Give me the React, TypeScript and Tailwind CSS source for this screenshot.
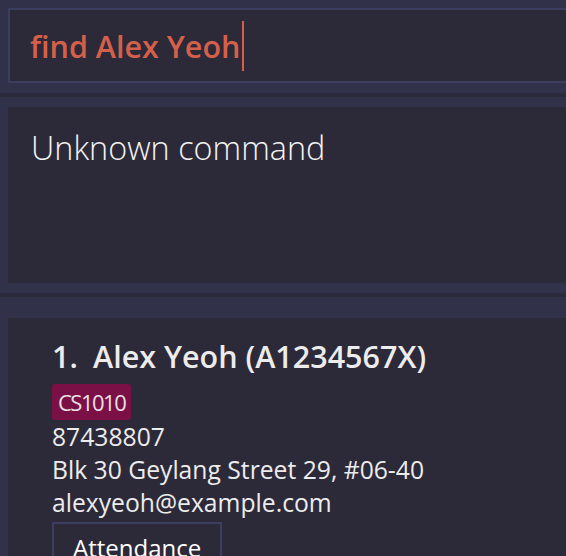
import React from 'react';

const person = {
    index: 1,
    name: 'Alex Yeoh',
    matric: 'A1234567X',
    tags: ['CS1010'],
    phone: '87438807',
    address: 'Blk 30 Geylang Street 29, #06-40',
    email: 'alexyeoh@example.com',
};

const font = { fontFamily: '"Open Sans", "Noto Sans", sans-serif' };

const App: React.FC = () => {
    return (
        <div className='w-[566px] h-[556px] overflow-hidden bg-[#31324a] flex flex-col' style={font}>
            {/* command box */}
            <div className='mt-[8px] ml-[8px] h-[75px] shrink-0 border-2 border-r-0 border-[#3c3e5f] bg-[#2c2939] flex items-center pl-[20px]'>
                <span className='text-[30.5px] leading-[40px] font-semibold text-[#d5604a]'>find Alex Yeoh</span>
                <span className='ml-[2px] w-[2px] h-[50px] bg-[#d5604a]' />
            </div>

            <div className='mt-[10px] h-[4px] shrink-0 bg-[#2a2a3a]' />

            {/* result display */}
            <div className='mt-[10px] ml-[8px] h-[176px] shrink-0 bg-[#2c2939] pt-[20px] pl-[23px]'>
                <p className='text-[32.4px] leading-[40px] font-light text-[#f3f3f3]'>Unknown command</p>
            </div>

            <div className='mt-[10px] h-[4px] shrink-0 bg-[#2a2a3a]' />

            {/* person list */}
            <div className='mt-[21px] ml-[8px] flex-1 bg-[#2c2939] pt-[20px] pl-[44px] text-[#ececec]'>
                <div className='flex text-[30.5px] leading-[36px] font-semibold'>
                    <span className='w-[41px]'>{person.index}.</span>
                    <span>{person.name} ({person.matric})</span>
                </div>
                <div className='mt-[10px] flex gap-2'>
                    {person.tags.map((tag) => (
                        <span key={tag} className='h-[36px] px-[6px] rounded-[3px] bg-[#7b1046] text-[22px] leading-[36px] tracking-[-1.5px] text-[#e8e0e6]'>
                            {tag}
                        </span>
                    ))}
                </div>
                <div className='text-[24.7px] leading-[33px]'>
                    <p>{person.phone}</p>
                    <p>{person.address}</p>
                    <p>{person.email}</p>
                </div>
                <div className='mt-[3px] w-[170px] border-2 border-[#3c3e5f] pt-[7px] pl-[19px] pb-[6px] text-[24px] leading-[33px] text-white'>
                    Attendance
                </div>
            </div>
        </div>
    );
};

export default App;
